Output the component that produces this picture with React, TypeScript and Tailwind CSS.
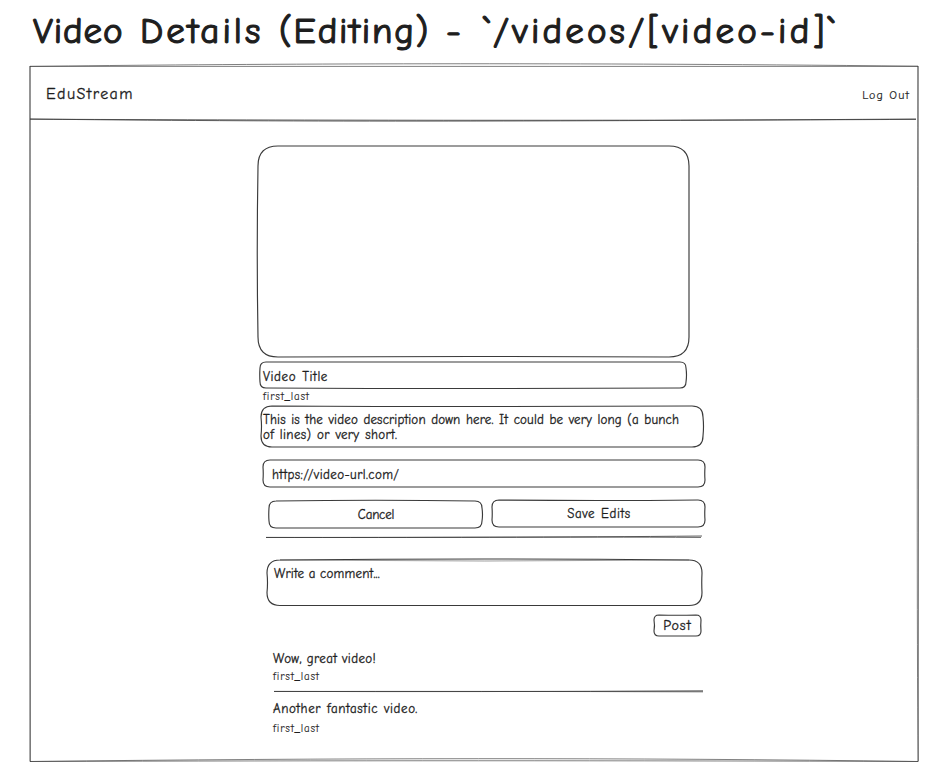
import type { ReactNode } from 'react';

const INK = '#3a3a3a';

type Bow = { t?: number; r?: number; b?: number; l?: number };

function roundedPath(w: number, h: number, r: number, bow: Bow) {
  const { t = 0, r: right = 0, b = 0, l = 0 } = bow;
  return [
    `M${r} 0`,
    `Q${w / 2} ${t} ${w - r} 0`,
    `Q${w} 0 ${w} ${r}`,
    `Q${w + right} ${h / 2} ${w} ${h - r}`,
    `Q${w} ${h} ${w - r} ${h}`,
    `Q${w / 2} ${h + b} ${r} ${h}`,
    `Q0 ${h} 0 ${h - r}`,
    `Q${l} ${h / 2} 0 ${r}`,
    `Q0 0 ${r} 0`,
  ].join(' ');
}

function Outline({ w, h, r, bow = {} }: { w: number; h: number; r: number; bow?: Bow }) {
  return (
    <svg className="pointer-events-none absolute top-0 left-0 overflow-visible" width={w} height={h} fill="none" stroke={INK} aria-hidden="true">
      <path d={roundedPath(w, h, r, bow)} strokeWidth="1.15" />
    </svg>
  );
}

function Rule({ w, d, className }: { w: number; d: string[]; className: string }) {
  return (
    <svg className={`block shrink-0 overflow-visible ${className}`} width={w} height={1} fill="none" stroke={INK} aria-hidden="true">
      {d.map((p) => (
        <path key={p} d={p} strokeWidth="0.8" />
      ))}
    </svg>
  );
}

function Box({ w, h, r, bow, className = '', children }: { w: number; h: number; r: number; bow?: Bow; className?: string; children?: ReactNode }) {
  return (
    <div className={`relative shrink-0 ${className}`}>
      <Outline w={w} h={h} r={r} bow={bow} />
      {children}
    </div>
  );
}

function Author({ className }: { className: string }) {
  return <p className={`h-3 text-[11px] leading-3 tracking-[0.78px] [-webkit-text-stroke:0.1px_#1e1e1e] ${className}`}>first_last</p>;
}

export default function App() {
  return (
    <div className="flex h-[783px] w-[952px] flex-col overflow-hidden bg-white font-['Comic_Neue','Lato',sans-serif] text-[#1e1e1e]">
      <h1 className="flex h-[66px] shrink-0 pt-[9px] pl-[33px] text-[37px] leading-[44px] whitespace-nowrap [-webkit-text-stroke:1.2px_#1e1e1e]">
        <span className="w-[107px] tracking-[0.9px]">Video</span>
        <span className="w-[139px] tracking-[3px]">Details</span>
        <span className="w-[167px] tracking-[1.8px]">(Editing)</span>
        <span className="w-[37px]">-</span>
        <span className="tracking-[3.2px]">`/videos/[video-id]`</span>
      </h1>

      <div className="relative ml-[30px] flex h-[696px] w-[888px] shrink-0 flex-col [-webkit-text-stroke:0.3px_#1e1e1e]">
        <svg className="pointer-events-none absolute top-0 left-0 overflow-visible" width="888" height="696" fill="none" stroke={INK} strokeWidth="0.65" aria-hidden="true">
          <path d="M0 0.4H888" />
          <path d="M0 0.4C200 -2 500 -4 888 0.2" />
          <path d="M888 0Q889 350 888.3 695.5" />
          <path d="M888 0Q886.5 500 888 695.5" />
          <path d="M0 695.5C300 694.5 600 694.5 888 695.5" />
          <path d="M0 695.5C300 692 600 691.5 888 695.5" />
          <path d="M0 0Q-0.6 350 0 695.5" />
          <path d="M0 0Q0.6 350 0.3 695.5" />
        </svg>

        <header className="flex h-[53px] shrink-0 items-center justify-between pr-2 pl-[15px]">
          <div className="pt-[3px] pl-px text-base leading-5 tracking-[1.4px]">EduStream</div>
          <button className="pt-[5px] text-xs leading-4 tracking-[1.15px] [-webkit-text-stroke:0.15px_#1e1e1e]">Log Out</button>
        </header>
        <Rule w={886} className="" d={['M0 0C250 3 500 2.6 886 0', 'M0 0.2C350 1.6 600 1.6 886 0.4']} />

        <main className="flex flex-col pl-[228px] text-[13px] leading-[15px] whitespace-nowrap">
          <Box w={431} h={211} r={20} bow={{ l: -1.5, b: -1 }} className="mt-[26px] h-[211px] w-[431px]" />

          <Box w={426} h={26} r={6} bow={{ b: 1, r: 1, l: -0.5 }} className="mt-[5px] ml-[2px] flex h-[26px] w-[426px] items-center pt-[3px] pl-[3px]">
            <span className="tracking-[0.6px] [word-spacing:1px]">Video Title</span>
          </Box>
          <Author className="mt-[3px] ml-[5px]" />

          <Box w={442} h={41} r={11} bow={{ t: 1, r: 1, l: 1 }} className="mt-[3px] ml-[3px] h-[41px] w-[442px] pt-[6px] pl-[2px]">
            <p className="tracking-[0.15px] [word-spacing:1px]">This is the video description down here. It could be very long (a bunch</p>
            <p className="tracking-[0.35px] [word-spacing:1px]">of lines) or very short.</p>
          </Box>

          <Box w={442} h={27} r={7} bow={{ r: -0.5, l: 0.5 }} className="mt-[13px] ml-[5px] flex h-[27px] w-[442px] items-center pt-px pl-[9px]">
            <span className="tracking-[0.39px]">https://video-url.com/</span>
          </Box>

          <div className="mt-[13px] ml-[11px] flex h-[28px] shrink-0 gap-[10px]">
            <Box w={213} h={27} r={7} bow={{ t: -1.5, l: -0.5, r: 1 }} className="mt-px flex h-[27px] w-[213px] items-center justify-center pb-px pl-px">
              <span className="tracking-[-0.2px]">Cancel</span>
            </Box>
            <Box w={213} h={27} r={7} bow={{ t: 1, l: 0.5, r: -0.5 }} className="flex h-[27px] w-[213px] items-center justify-center pb-px pl-px">
              <span className="tracking-[0.6px] [word-spacing:1px]">Save Edits</span>
            </Box>
          </div>

          <Rule w={437} className="mt-[8px] ml-[8px]" d={['M0 1.4C150 1.6 300 1.3 436 0', 'M0 1.5C150 1.6 300 0.6 435 1.4']} />

          <Box w={435} h={45.5} r={13} bow={{ t: -2, l: 1, r: -0.5 }} className="mt-[23px] ml-[9px] h-[46px] w-[435px] pt-[6px] pl-[7px]">
            <svg className="absolute top-0 left-0 overflow-visible" width="435" height="2" fill="none" stroke={INK} aria-hidden="true">
              <path d="M13 0Q218 2 422 0" strokeWidth="0.5" />
            </svg>
            <span className="tracking-[0.18px]">Write a comment...</span>
          </Box>

          <Box w={47} h={21} r={5} bow={{ l: 1, r: -0.5, t: 0.5 }} className="mt-[9px] ml-[396px] flex h-[21px] w-[47px] items-center justify-center">
            <span className="pt-px text-sm leading-4 tracking-[1px]">Post</span>
          </Box>

          <p className="mt-[15px] ml-[15px] tracking-[0.38px]">Wow, great video!</p>
          <Author className="mt-[5px] ml-[15px]" />
          <Rule w={429} className="mt-[8px] ml-[16px]" d={['M0 0.4Q200 1 429 -0.2', 'M0 0.5Q200 0.2 429 0.8']} />
          <p className="mt-[9px] ml-[15px] tracking-[0.6px] [word-spacing:1px]">Another fantastic video.</p>
          <Author className="mt-[7px] ml-[15px]" />
        </main>
      </div>
    </div>
  );
}
